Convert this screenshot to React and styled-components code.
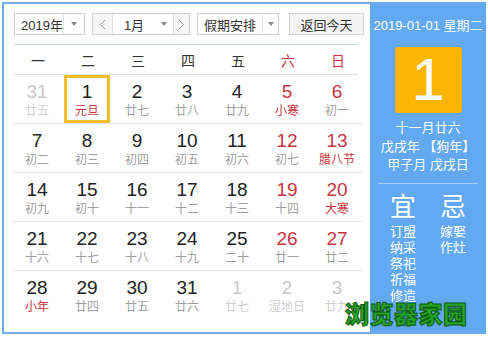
import React from "react";
import styled, { createGlobalStyle } from "styled-components";

const GlobalStyle = createGlobalStyle`
    html, body {
        margin: 0;
        padding: 0;
        background: #fff;
    }
    body {
        width: 488px;
        height: 337px;
        overflow: hidden;
        font-family: "Liberation Sans", "Noto Sans CJK SC", sans-serif;
    }
`;

const Frame = styled.div`
    position: relative;
    margin: 2px 0 0 2px;
    width: 484px;
    height: 332px;
    box-sizing: border-box;
    border: 2px solid #6ea9ea;
    display: flex;
`;

const LeftPanel = styled.div`
    width: 366px;
    padding: 9px 0 0 8px;
    box-sizing: border-box;
`;

const Toolbar = styled.div`
    display: flex;
    height: 22px;
    margin-left: 2px;
`;

const Control = styled.div`
    display: flex;
    align-items: stretch;
    height: 22px;
    box-sizing: border-box;
    border: 1px solid #cfcfcf;
    background: #fff;
    margin-right: ${p => p.$gap || 0}px;
    font-size: 13px;
    color: #333;
`;

const Label = styled.div`
    width: ${p => p.$w}px;
    display: flex;
    align-items: center;
    justify-content: ${p => p.$center ? "center" : "flex-start"};
    padding-left: ${p => p.$center ? 0 : 6}px;
    box-sizing: border-box;
`;

const CaretBox = styled.div`
    width: ${p => p.$w || 20}px;
    border-left: ${p => p.$line ? "1px solid #e2e2e2" : "none"};
    display: flex;
    align-items: center;
    justify-content: center;
    &::after {
        content: "";
        border-left: 3px solid transparent;
        border-right: 3px solid transparent;
        border-top: 4px solid #8a8a8a;
    }
`;

const ArrowBtn = styled.div`
    width: ${p => p.$w}px;
    background: #f6f6f6;
    border-left: ${p => p.$side === "right" ? "1px solid #dcdcdc" : "none"};
    border-right: ${p => p.$side === "left" ? "1px solid #dcdcdc" : "none"};
    display: flex;
    align-items: center;
    justify-content: center;
    color: #999;
    svg {
        display: block;
    }
`;

const TodayButton = styled.div`
    width: 75px;
    height: 22px;
    box-sizing: border-box;
    border: 1px solid #cfcfcf;
    background: #f4f4f4;
    display: flex;
    align-items: center;
    justify-content: center;
    font-size: 13px;
    color: #333;
`;

const Grid = styled.div`
    width: 350px;
    margin-top: 9px;
`;

const WeekHeader = styled.div`
    display: grid;
    grid-template-columns: repeat(7, 50px);
    height: 29px;
    margin: 0 4px 0 2px;
    border-top: 1px solid #c4d9f2;
    border-bottom: 1px solid #e4e4e4;
`;

const WeekDay = styled.div`
    display: flex;
    align-items: center;
    justify-content: center;
    font-size: 14px;
    color: ${p => p.$red ? "#c9353f" : "#333"};
    margin-left: -2px;
`;

const Row = styled.div`
    display: grid;
    grid-template-columns: repeat(7, 50px);
    height: 48px;
    border-bottom: ${p => p.$last ? "none" : "1px solid #e6e6e6"};
`;

const Cell = styled.div`
    position: relative;
    display: flex;
    flex-direction: column;
    align-items: center;
    padding-top: 7px;
    box-sizing: border-box;
    height: 48px;
    margin: 0 2px;
    border: ${p => p.$selected ? "3px solid #f3bd2c" : "none"};
    padding-top: ${p => p.$selected ? 4 : 7}px;
`;

const DayNum = styled.div`
    font-size: 19px;
    line-height: 20px;
    color: ${p => p.$muted ? "#c8c8c8" : p.$red ? "#c9353f" : "#222"};
`;

const Lunar = styled.div`
    margin-top: 2px;
    font-size: 12px;
    line-height: 14px;
    color: ${p => p.$muted ? "#cfcfcf" : p.$red ? "#c9353f" : "#a0a0a0"};
`;

const RightPanel = styled.div`
    flex: 1;
    margin-right: -2px;
    background: #62a9f1;
    color: #fff;
    display: flex;
    flex-direction: column;
    align-items: center;
`;

const DateLine = styled.div`
    margin-top: 14px;
    font-size: 13px;
    line-height: 16px;
`;

const BigDay = styled.div`
    margin-top: 13px;
    width: 67px;
    height: 66px;
    border-radius: 3px;
    background: #fbb505;
    display: flex;
    align-items: center;
    justify-content: center;
    font-size: 60px;
    line-height: 1;
`;

const LunarInfo = styled.div`
    margin-top: 6px;
    font-size: 13px;
    line-height: 18.5px;
    text-align: center;
`;

const Divider = styled.div`
    width: 100px;
    height: 1px;
    margin-top: 8px;
    background: #a9cff6;
`;

const Advice = styled.div`
    display: flex;
    margin-top: 9px;
`;

const AdviceCol = styled.div`
    width: 50px;
    display: flex;
    flex-direction: column;
    align-items: center;
`;

const AdviceTitle = styled.div`
    font-size: 26px;
    line-height: 28px;
    margin-bottom: 3px;
`;

const AdviceItem = styled.div`
    font-size: 13px;
    line-height: 16px;
`;

const Watermark = styled.div`
    position: absolute;
    left: 341px;
    top: 296px;
    font-family: "Noto Sans CJK SC", sans-serif;
    font-weight: 900;
    font-size: 24px;
    line-height: 26px;
    color: #27a327;
    -webkit-text-stroke: 1px #0b5a0b;
    letter-spacing: 0.5px;
`;

const weeks = [
    [["31", "廿五", "m"], ["1", "元旦", "sel"], ["2", "廿七"], ["3", "廿八"], ["4", "廿九"], ["5", "小寒", "r"], ["6", "初一", "rn"]],
    [["7", "初二"], ["8", "初三"], ["9", "初四"], ["10", "初五"], ["11", "初六"], ["12", "初七", "rn"], ["13", "腊八节", "r"]],
    [["14", "初九"], ["15", "初十"], ["16", "十一"], ["17", "十二"], ["18", "十三"], ["19", "十四", "rn"], ["20", "大寒", "r"]],
    [["21", "十六"], ["22", "十七"], ["23", "十八"], ["24", "十九"], ["25", "二十"], ["26", "廿一", "rn"], ["27", "廿二", "rn"]],
    [["28", "小年", "rl"], ["29", "廿四"], ["30", "廿五"], ["31", "廿六"], ["1", "廿七", "m"], ["2", "湿地日", "m"], ["3", "廿九", "m"]],
];

const Chevron = ({ dir }) => (
    <svg width="7" height="11" viewBox="0 0 7 11">
        <path
            d={dir === "left" ? "M6 1 L1.5 5.5 L6 10" : "M1 1 L5.5 5.5 L1 10"}
            fill="none"
            stroke="#9a9a9a"
            strokeWidth="1"
        />
    </svg>
);

function DayCell({ day }) {
    const [num, lunar, kind] = day;
    const muted = kind === "m";
    return (
        <Cell $selected={kind === "sel"}>
            <DayNum $muted={muted} $red={kind === "r" || kind === "rn"}>{num}</DayNum>
            <Lunar $muted={muted} $red={kind === "r" || kind === "sel" || kind === "rl"}>{lunar}</Lunar>
        </Cell>
    );
}

export default function App() {
    return (
        <>
            <GlobalStyle />
            <Frame>
                <LeftPanel>
                    <Toolbar>
                        <Control $gap={7}>
                            <Label $w={48}>2019年</Label>
                            <CaretBox $line />
                        </Control>
                        <Control $gap={7}>
                            <ArrowBtn $w={19} $side="left"><Chevron dir="left" /></ArrowBtn>
                            <Label $w={42} $center>1月</Label>
                            <CaretBox $w={18} />
                            <ArrowBtn $w={15} $side="right"><Chevron dir="right" /></ArrowBtn>
                        </Control>
                        <Control $gap={10}>
                            <Label $w={64}>假期安排</Label>
                            <CaretBox $w={15} $line />
                        </Control>
                        <TodayButton>返回今天</TodayButton>
                    </Toolbar>
                    <Grid>
                        <WeekHeader>
                            {["一", "二", "三", "四", "五", "六", "日"].map((d, i) => (
                                <WeekDay key={d} $red={i > 4}>{d}</WeekDay>
                            ))}
                        </WeekHeader>
                        {weeks.map((w, i) => (
                            <Row key={i} $last={i === weeks.length - 1}>
                                {w.map((d, j) => <DayCell key={j} day={d} />)}
                            </Row>
                        ))}
                    </Grid>
                </LeftPanel>
                <RightPanel>
                    <DateLine>2019-01-01 星期二</DateLine>
                    <BigDay>1</BigDay>
                    <LunarInfo>
                        十一月廿六<br />
                        戊戌年 【狗年】<br />
                        甲子月 戊戌日
                    </LunarInfo>
                    <Divider />
                    <Advice>
                        <AdviceCol>
                            <AdviceTitle>宜</AdviceTitle>
                            {["订盟", "纳采", "祭祀", "祈福", "修造"].map(t => <AdviceItem key={t}>{t}</AdviceItem>)}
                        </AdviceCol>
                        <AdviceCol>
                            <AdviceTitle>忌</AdviceTitle>
                            {["嫁娶", "作灶"].map(t => <AdviceItem key={t}>{t}</AdviceItem>)}
                        </AdviceCol>
                    </Advice>
                </RightPanel>
                <Watermark>浏览器家园</Watermark>
            </Frame>
        </>
    );
}
